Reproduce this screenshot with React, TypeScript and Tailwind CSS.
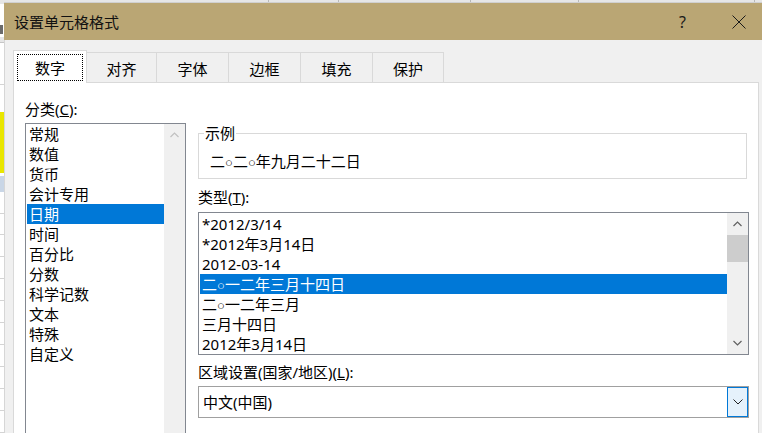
import type { ReactNode } from "react"

const categories = ["常规", "数值", "货币", "会计专用", "日期", "时间", "百分比", "分数", "科学记数", "文本", "特殊", "自定义"]
const types = ["*2012/3/14", "*2012年3月14日", "2012-03-14", "二○一二年三月十四日", "二○一二年三月", "三月十四日", "2012年3月14日"]

const tabs = [
  { label: "数字", w: "w-[74px]" },
  { label: "对齐", w: "w-[70px]" },
  { label: "字体", w: "w-[72px]" },
  { label: "边框", w: "w-[72px]" },
  { label: "填充", w: "w-[72px]" },
  { label: "保护", w: "w-[71px]" },
]

// the small circle glyph renders narrow in the original, so give it a latin font
function Txt({ text }: { text: string }) {
  const parts: ReactNode[] = []
  text.split("○").forEach((p, i) => {
    if (i > 0) parts.push(<span key={`c${i}`} className="font-['Liberation_Sans'] text-[13px]">○</span>)
    if (p) parts.push(<span key={`t${i}`}>{p}</span>)
  })
  return <>{parts}</>
}

function Chevron({ dir, color }: { dir: "up" | "down"; color: string }) {
  return (
    <svg width="9" height="6" viewBox="0 0 9 6">
      <polyline
        points={dir === "up" ? "0.5,5 4.5,1 8.5,5" : "0.5,1 4.5,5 8.5,1"}
        fill="none"
        stroke={color}
        strokeWidth="1.2"
      />
    </svg>
  )
}

function Row({ text, selected }: { text: string; selected?: boolean }) {
  return (
    <div
      className={`h-[20px] leading-[20px] ml-[1px] pl-[2px] whitespace-nowrap ${
        selected ? "bg-[#0078d7] text-white" : "text-black"
      }`}
    >
      <Txt text={text} />
    </div>
  )
}

function SheetEdge() {
  return (
    <div className="w-[4px] flex flex-col bg-white shrink-0">
      <div className="h-[4px] bg-[#e6e6e6]" />
      <div className="h-[33px] flex flex-col justify-end pb-[3px]">
        <div className="h-[9px] w-[3px] bg-[#6b6b6b]" />
      </div>
      <div className="h-[6px] bg-[#e6e6e6] border-b border-[#c6c6c6]" />
      <div className="h-[42px] border-b border-[#d4d4d4]" />
      <div className="h-[27px]" />
      <div className="h-[61px] bg-[#e9e600]" />
      <div className="h-[3px]" />
      <div className="h-[16px] bg-[#c9d6e6]" />
      {[0, 1, 2, 3, 4, 5, 6, 7, 8, 9, 10].map((i) => (
        <div key={i} className="h-[22px] border-b border-[#d4d4d4]" />
      ))}
    </div>
  )
}

export default function App() {
  return (
    <div className="w-[762px] h-[433px] overflow-hidden flex bg-white font-['Noto_Sans','Noto_Sans_CJK_SC',sans-serif] text-[15px] text-black">
      <SheetEdge />

      <div className="flex-1 flex flex-col min-w-0">
        {/* sheet strip above the dialog */}
        <div className="h-[3px] shrink-0 flex bg-[#e6e6e6] border-b border-[#d0d0d0]">
          <div className="w-[265px] border-r border-[#b8b8b8]" />
          <div className="w-[70px] border-r border-[#b8b8b8]" />
          <div className="w-[132px] border-r border-[#b8b8b8]" />
          <div className="w-[108px] border-r border-[#b8b8b8]" />
          <div className="w-[176px] border-r border-[#b8b8b8]" />
        </div>

        {/* title bar */}
        <div className="h-[37px] shrink-0 bg-[#baa674] flex items-center pl-[10px] pr-[16px]">
          <span className="leading-[20px] text-[#111]">设置单元格格式</span>
          <div className="flex-1" />
          <span className="text-[16px] leading-[20px] text-[#1a1a1a] mr-[46px]">?</span>
          <svg width="14" height="14" viewBox="0 0 14 14">
            <line x1="0.5" y1="0.5" x2="13.5" y2="13.5" stroke="#1a1a1a" strokeWidth="1" />
            <line x1="13.5" y1="0.5" x2="0.5" y2="13.5" stroke="#1a1a1a" strokeWidth="1" />
          </svg>
        </div>

        {/* body */}
        <div className="flex-1 flex flex-col bg-[#f0f0f0] border-l border-[#d6d6d6] pl-[8px] pr-[3px] pt-[10px] min-h-0">
          <div className="h-[32px] flex items-end shrink-0">
            {tabs.map((t, i) =>
              i === 0 ? (
                <div
                  key={t.label}
                  className={`${t.w} h-[33px] -mb-[1px] relative z-10 bg-white border-l border-t border-r border-[#d9d9d9] px-[3px] pt-[3px] pb-[2px]`}
                >
                  <div className="h-full border border-dotted border-black flex items-center justify-center leading-[20px] pt-[1px]">
                    {t.label}
                  </div>
                </div>
              ) : (
                <div
                  key={t.label}
                  className={`${t.w} h-[30px] border-t border-r border-[#d9d9d9] flex items-center justify-center leading-[20px] pt-[2px]`}
                >
                  {t.label}
                </div>
              ),
            )}
          </div>

          <div className="flex-1 bg-white border border-[#d9d9d9] flex items-start pl-[11px]">
            {/* category column */}
            <div className="w-[161px] mt-[16px] flex flex-col">
              <div className="h-[20px] leading-[20px]">
                分类(<span className="underline">C</span>):
              </div>
              <div className="mt-[4px] h-[320px] border border-[#828790] flex">
                <div className="flex-1">
                  {categories.map((c) => (
                    <Row key={c} text={c} selected={c === "日期"} />
                  ))}
                </div>
                <div className="w-[21px] bg-[#f0f0f0] flex justify-center pt-[8px]">
                  <Chevron dir="up" color="#c0c0c0" />
                </div>
              </div>
            </div>

            {/* format column */}
            <div className="w-[551px] ml-[12px] mt-[40px] flex flex-col">
              <fieldset className="w-[549px] border border-[#d9d9d9] pl-[5px] pb-[5px]">
                <legend className="px-[1px] leading-[20px]">示例</legend>
                <div className="pl-[6px] pt-[8px] leading-[20px]">
                  <Txt text="二○二○年九月二十二日" />
                </div>
              </fieldset>

              <div className="mt-[8px] h-[20px] leading-[20px]">
                类型(<span className="underline">T</span>):
              </div>
              <div className="mt-[5px] h-[143px] border border-[#828790] flex">
                <div className="flex-1 pt-[1px]">
                  {types.map((t, i) => (
                    <Row key={t} text={t} selected={i === 3} />
                  ))}
                </div>
                <div className="w-[21px] bg-[#f0f0f0] flex flex-col">
                  <div className="h-[22px] flex items-center justify-center">
                    <Chevron dir="up" color="#606060" />
                  </div>
                  <div className="h-[27px] bg-[#cdcdcd]" />
                  <div className="flex-1" />
                  <div className="h-[22px] flex items-center justify-center">
                    <Chevron dir="down" color="#606060" />
                  </div>
                </div>
              </div>

              <div className="mt-[7px] h-[20px] leading-[20px]">
                区域设置(国家/地区)(<span className="underline">L</span>):
              </div>
              <div className="mt-[4px] h-[32px] border border-[#a0a0a0] flex">
                <div className="flex-1 pl-[4px] leading-[30px]">中文(中国)</div>
                <div className="w-[21px] bg-[#e5f1fb] border border-[#0078d7] flex items-center justify-center">
                  <svg width="10" height="6" viewBox="0 0 10 6">
                    <polyline points="0.5,0.5 5,5 9.5,0.5" fill="none" stroke="#222" strokeWidth="1" />
                  </svg>
                </div>
              </div>
            </div>
          </div>
        </div>
      </div>
    </div>
  )
}
